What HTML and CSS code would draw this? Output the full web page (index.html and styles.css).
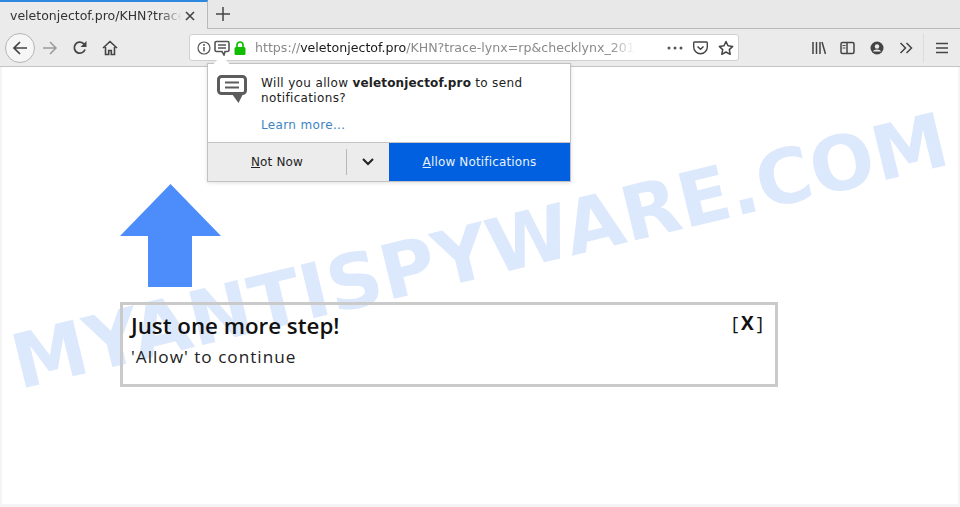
FILE: index.html
```html
<!DOCTYPE html>
<html lang="en">
<head>
    <meta charset="UTF-8">
    <meta name="viewport" content="width=device-width, initial-scale=1.0">
    <title>veletonjectof.pro</title>
    <link rel="stylesheet" href="styles.css">
</head>
<body>
<div class="browser">
    <div class="tabbar">
        <div class="tab">
            <span class="tab-title">veletonjectof.pro/KHN?trace</span>
            <svg class="icon-close" width="12" height="12" viewBox="0 0 12 12"><path d="M2 2l8 8M10 2l-8 8" stroke="#444" stroke-width="1.6" fill="none"/></svg>
        </div>
        <svg class="icon-plus" width="14" height="14" viewBox="0 0 14 14"><path d="M7 0v14M0 7h14" stroke="#444" stroke-width="1.5" fill="none"/></svg>
    </div>

    <div class="toolbar">
        <div class="nav">
            <div class="back">
                <svg width="16" height="16" viewBox="0 0 16 16"><path d="M15 8H2M8 2L2 8l6 6" stroke="#444" stroke-width="1.7" fill="none"/></svg>
            </div>
            <svg class="forward" width="16" height="16" viewBox="0 0 16 16"><path d="M1 8h13M8 2l6 6-6 6" stroke="#9b9b9b" stroke-width="1.5" fill="none"/></svg>
            <svg class="reload" width="16" height="16" viewBox="0 0 16 16"><path d="M13 9.500A5.500 5.500 0 1 1 11.500 3.600L13.500 5.500" stroke="#444" stroke-width="1.800" fill="none"/><path d="M14.500 1v6h-6z" fill="#444"/></svg>
            <svg class="home" width="16" height="16" viewBox="0 0 16 16"><path d="M1 8l7-6.500L15 8M3.500 7v7.500h3.200v-4h2.600v4h3.200V7" stroke="#444" stroke-width="1.600" fill="none"/></svg>
        </div>

        <div class="urlbar">
            <svg class="icon-info" width="14" height="14" viewBox="0 0 14 14"><circle cx="7" cy="7" r="6" stroke="#555" stroke-width="1.200" fill="none"/><path d="M7 6v4.500" stroke="#555" stroke-width="1.500"/><circle cx="7" cy="3.900" r="1" fill="#555"/></svg>
            <svg class="icon-msg" width="16" height="16" viewBox="0 0 16 16"><path d="M2.500 1.500h11a1.500 1.500 0 0 1 1.500 1.500v7a1.500 1.500 0 0 1-1.500 1.500H11L10 15l-2-3.500H2.500A1.500 1.500 0 0 1 1 10V3a1.500 1.500 0 0 1 1.500-1.500z" stroke="#555" stroke-width="1.600" fill="#fff"/><path d="M4 5h8M4 8h8" stroke="#555" stroke-width="1.300"/></svg>
            <svg class="icon-lock" width="12" height="14" viewBox="0 0 12 14"><path d="M3 6.500V4a3 3 0 0 1 6 0v2.500" stroke="#12bc00" stroke-width="1.700" fill="none"/><rect x="0.500" y="6" width="11" height="8" rx="1.500" fill="#12bc00"/></svg>
            <div class="url"><span class="url-dim">https://</span>veletonjectof.pro<span class="url-dim">/KHN?trace-lynx=rp&amp;checklynx_2018</span></div>
            <svg class="icon-dots" width="16" height="4" viewBox="0 0 16 4"><circle cx="2" cy="2" r="1.500" fill="#555"/><circle cx="8" cy="2" r="1.500" fill="#555"/><circle cx="14" cy="2" r="1.500" fill="#555"/></svg>
            <svg class="icon-pocket" width="15" height="14" viewBox="0 0 15 14"><path d="M1.500 1h12a.8.8 0 0 1 .8.8V6a6.800 6.800 0 0 1-13.600 0V1.800a.8.8 0 0 1 .8-.8z" stroke="#444" stroke-width="1.400" fill="none"/><path d="M4.500 5.500l3 2.800 3-2.800" stroke="#444" stroke-width="1.500" fill="none"/></svg>
            <svg class="icon-star" width="16" height="16" viewBox="0 0 16 16"><path d="M8 1.500l2 4.300 4.700.6-3.400 3.200.9 4.700L8 12l-4.200 2.300.9-4.700L1.300 6.400 6 5.800z" stroke="#444" stroke-width="1.500" stroke-linejoin="round" fill="none"/></svg>
        </div>

        <div class="tools">
            <div class="tool"><svg width="14" height="14" viewBox="0 0 14 14"><path d="M1 1v12M4.500 1v12M8 1v12M10 1l3.500 12" stroke="#444" stroke-width="1.500" fill="none"/></svg></div>
            <div class="tool"><svg width="15" height="14" viewBox="0 0 15 14"><rect x="1" y="1.500" width="13" height="11" rx="1.500" stroke="#444" stroke-width="1.500" fill="none"/><path d="M7 2v10" stroke="#444" stroke-width="1.500"/><path d="M2.500 4.500h3M2.500 7h3" stroke="#444"/></svg></div>
            <div class="tool"><svg width="14" height="14" viewBox="0 0 14 14"><circle cx="7" cy="7" r="6.500" fill="#444"/><circle cx="7" cy="5.500" r="2.200" fill="#ebebeb"/><path d="M2.800 10.500a4.500 3 0 0 1 8.400 0z" fill="#ebebeb"/></svg></div>
            <div class="tool"><svg width="14" height="12" viewBox="0 0 14 12"><path d="M1.500 1l5 5-5 5M7.500 1l5 5-5 5" stroke="#444" stroke-width="1.500" fill="none"/></svg></div>
            <span class="tools-sep"></span>
            <div class="tool"><svg width="12" height="12" viewBox="0 0 12 12"><path d="M0 1.500h12M0 6h12M0 10.500h12" stroke="#444" stroke-width="1.600"/></svg></div>
        </div>
    </div>

    <div class="page">
        <div class="watermark">MYANTISPYWARE.COM</div>
        <svg class="arrow" width="101" height="103" viewBox="0 0 101 103"><path d="M50.500 0L101 52H72v51H28V52H0z" fill="#4d8dfb"/></svg>
        <div class="card">
            <div class="card-head">
                <h1>Just one more step!</h1>
                <span class="card-close">[<b>X</b>]</span>
            </div>
            <p>'Allow' to continue</p>
        </div>
    </div>

    <div class="popup">
        <div class="popup-tip"></div>
        <div class="popup-body">
            <svg class="popup-icon" width="30" height="28" viewBox="0 0 30 28"><path d="M15 19h11l-4.500 9z" fill="#5c5c5c"/><rect x="1.500" y="1.500" width="27" height="17" rx="3" stroke="#5c5c5c" stroke-width="3" fill="#fff"/><path d="M8 7.500h14M8 12.500h14" stroke="#5c5c5c" stroke-width="2"/></svg>
            <div class="popup-text">
                <p>Will you allow <b>veletonjectof.pro</b> to send notifications?</p>
                <a class="learn" href="#">Learn more...</a>
            </div>
        </div>
        <div class="popup-actions">
            <div class="btn-later"><span><u>N</u>ot Now</span></div>
            <div class="btn-more">
                <svg width="12" height="8" viewBox="0 0 12 8"><path d="M1 1l5 5 5-5" stroke="#222" stroke-width="2" fill="none"/></svg>
            </div>
            <div class="btn-allow"><span><u>A</u>llow Notifications</span></div>
        </div>
    </div>
</div>
</body>
</html>
```

FILE: styles.css
```css
html, body {
    margin: 0;
    padding: 0;
}

body {
    font-family: "DejaVu Sans", sans-serif;
    background: #fff;
    overflow: hidden;
}

.browser {
    position: relative;
    width: 960px;
    height: 507px;
    display: flex;
    flex-direction: column;
    overflow: hidden;
}

/* TABS */
.tabbar {
    height: 29px;
    box-sizing: border-box;
    background: #e8e8e8;
    border-bottom: 1px solid #b9b9b9;
    display: flex;
    align-items: flex-start;
}

.tab {
    width: 208px;
    height: 29px;
    box-sizing: border-box;
    background: #ebebeb;
    border-top: 2px solid #2f88e0;
    border-right: 1px solid #b9b9b9;
    padding: 0 11px 0 10px;
    display: flex;
    align-items: center;
    justify-content: space-between;
}

.tab-title {
    width: 172px;
    overflow: hidden;
    white-space: nowrap;
    font-size: 12.500px;
    color: #333;
    -webkit-mask-image: linear-gradient(to right, #000 150px, transparent 172px);
    mask-image: linear-gradient(to right, #000 150px, transparent 172px);
}

.icon-plus {
    margin: 7px 0 0 8px;
}

/* TOOLBAR */
.toolbar {
    height: 38px;
    box-sizing: border-box;
    background: #ebebeb;
    border-bottom: 1px solid #c4c4c4;
    display: flex;
    align-items: center;
    padding-left: 5px;
}

.nav {
    flex: none;
    width: 184px;
    display: flex;
    align-items: center;
}

.back {
    width: 30px;
    height: 30px;
    box-sizing: border-box;
    background: #f6f6f6;
    border: 1px solid #b5b5b5;
    border-radius: 50%;
    display: flex;
    align-items: center;
    justify-content: center;
}

.forward {
    margin-left: 7px;
}

.reload {
    margin-left: 14px;
}

.home {
    margin-left: 14px;
}

.urlbar {
    flex: none;
    width: 550px;
    height: 27px;
    box-sizing: border-box;
    background: #fff;
    border: 1px solid #d0d0d0;
    border-radius: 3px;
    display: flex;
    align-items: center;
    padding-left: 7px;
}

.icon-msg {
    margin-left: 3px;
}

.icon-lock {
    margin-left: 4px;
}

.url {
    margin-left: 9px;
    width: 380px;
    overflow: hidden;
    white-space: nowrap;
    font-size: 12.600px;
    color: #1a1a1a;
    -webkit-mask-image: linear-gradient(to right, #000 355px, transparent 380px);
    mask-image: linear-gradient(to right, #000 355px, transparent 380px);
}

.url-dim {
    color: #8a8a8a;
}

.icon-dots {
    margin-left: 32px;
}

.icon-pocket {
    margin-left: 10px;
}

.icon-star {
    margin-left: 10px;
}

.tools {
    flex: none;
    display: flex;
    align-items: center;
    padding-left: 65px;
}

.tool {
    width: 29px;
    display: flex;
    justify-content: center;
}

.tools-sep {
    width: 1px;
    height: 30px;
    background: #dcdcdc;
    margin: 0 3px;
}

/* PAGE */
.page {
    position: relative;
    flex: 1;
    box-sizing: border-box;
    background: #fff;
    border: solid #f4f4f4;
    border-width: 0 2px 3px 2px;
    padding: 117px 0 0 118px;
    overflow: hidden;
}

.watermark {
    position: absolute;
    left: -2px;
    top: 146px;
    width: 962px;
    font-size: 75.500px;
    line-height: 76px;
    font-weight: bold;
    white-space: nowrap;
    color: #dce8fb;
    transform: rotate(-13.600deg);
}

.arrow {
    position: relative;
    display: block;
}

.card {
    position: relative;
    width: 658px;
    height: 85px;
    box-sizing: border-box;
    margin-top: 15px;
    border: 3px solid #cacaca;
    padding: 6px 9px 0 8px;
    font-family: "Open Sans", sans-serif;
    color: #111;
}

.card-head {
    display: flex;
    justify-content: space-between;
}

.card h1 {
    margin: 0;
    font-size: 22.300px;
    line-height: 30px;
    font-weight: 600;
}

.card-close {
    margin-top: -1px;
    font-size: 19px;
    line-height: 26px;
    letter-spacing: 3px;
}

.card p {
    margin: 4px 0 0 0;
    font-size: 17.200px;
    line-height: 23px;
    letter-spacing: 1px;
    color: #222;
}

/* POPUP */
.popup {
    position: absolute;
    left: 207px;
    top: 63px;
    width: 364px;
    height: 119px;
    box-sizing: border-box;
    background: #fff;
    border: 1px solid #c2c2c2;
    box-shadow: 0 1px 4px rgba(0, 0, 0, 0.12);
    display: flex;
    flex-direction: column;
}

.popup-tip {
    position: absolute;
    left: 8px;
    top: -6px;
    width: 11px;
    height: 11px;
    background: #fff;
    transform: rotate(45deg);
}

.popup-body {
    position: relative;
    flex: 1;
    display: flex;
    padding: 11px 10px 0 9px;
}

.popup-icon {
    flex: none;
}

.popup-text {
    margin: 1px 0 0 14px;
    font-size: 12px;
    line-height: 15px;
    letter-spacing: 0.350px;
    color: #222;
}

.popup-text p {
    margin: 0;
}

.popup-text b {
    letter-spacing: 0.150px;
}

.learn {
    display: block;
    margin-top: 12px;
    color: #3d84c4;
    text-decoration: none;
}

.popup-actions {
    height: 39px;
    display: flex;
    font-size: 12px;
    letter-spacing: 0.150px;
    border-top: 1px solid #c4c4c4;
    box-sizing: border-box;
}

.btn-later {
    width: 138px;
    background: #ececec;
    color: #222;
    display: flex;
    align-items: center;
    justify-content: center;
}

.btn-more {
    width: 43px;
    background: #ececec;
    display: flex;
    align-items: center;
    justify-content: center;
    position: relative;
}

.btn-more::before {
    content: "";
    position: absolute;
    left: 0;
    top: 6px;
    bottom: 6px;
    width: 1px;
    background: #b8b8b8;
}

.btn-allow {
    flex: 1;
    background: #0060df;
    color: #e8f0fb;
    display: flex;
    align-items: center;
    justify-content: center;
}
```
